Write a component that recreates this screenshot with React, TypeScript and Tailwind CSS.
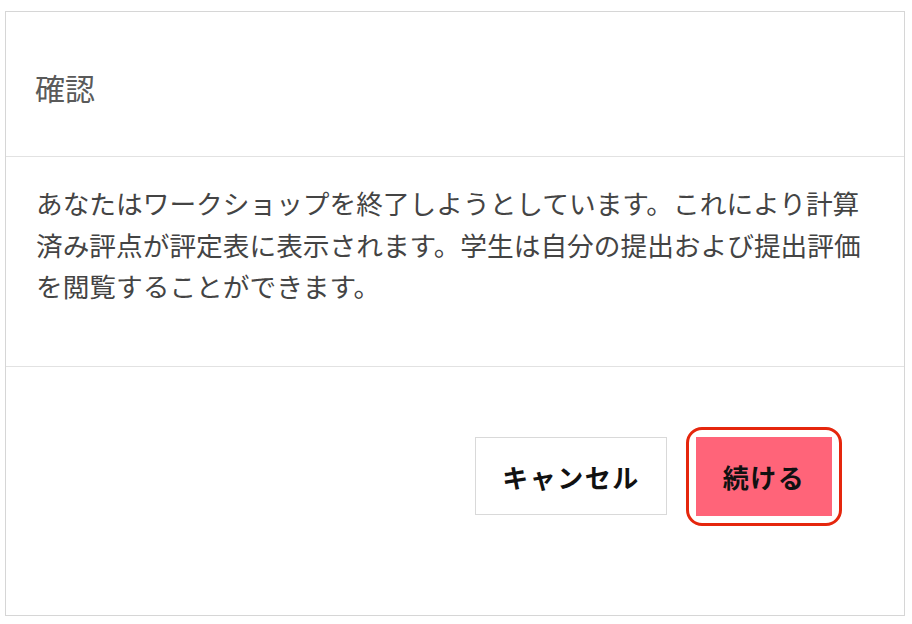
export default function App() {
  const font = { fontFamily: '"Noto Sans CJK JP", "Noto Sans", sans-serif' };
  return (
    <div className="w-[912px] h-[624px] bg-white pl-[5px] pt-[11px]" style={font}>
      <div className="w-[900px] h-[605px] border border-[#d6d6d6] flex flex-col">
        <div className="h-[145px] flex items-center px-[29px] pt-[6px] border-b border-[#e2e2e2]">
          <h2 className="text-[30px] font-normal text-[#5a5a5a] leading-none">確認</h2>
        </div>
        <div className="px-[30px] pt-[25px] pb-[59px] border-b border-[#e2e2e2]">
          <p className="text-[26.7px] leading-[41.5px] text-[#444444]">
            あなたはワークショップを終了しようとしています。これにより計算済み評点が評定表に表示されます。学生は自分の提出および提出評価を閲覧することができます。
          </p>
        </div>
        <div className="flex justify-end items-center pt-[60px] pr-[62px] gap-[19px]">
          <button className="w-[192px] h-[78px] border border-[#d9d9d9] bg-white text-[26px] tracking-[1.5px] font-bold text-[#111111]">
            キャンセル
          </button>
          <span className="inline-flex rounded-[16px] border-[3px] border-[#e5260d] p-[7px]">
            <button className="w-[136px] h-[79px] bg-[#ff6479] text-[26px] tracking-[1.5px] font-bold text-[#111111]">
              続ける
            </button>
          </span>
        </div>
      </div>
    </div>
  );
}
